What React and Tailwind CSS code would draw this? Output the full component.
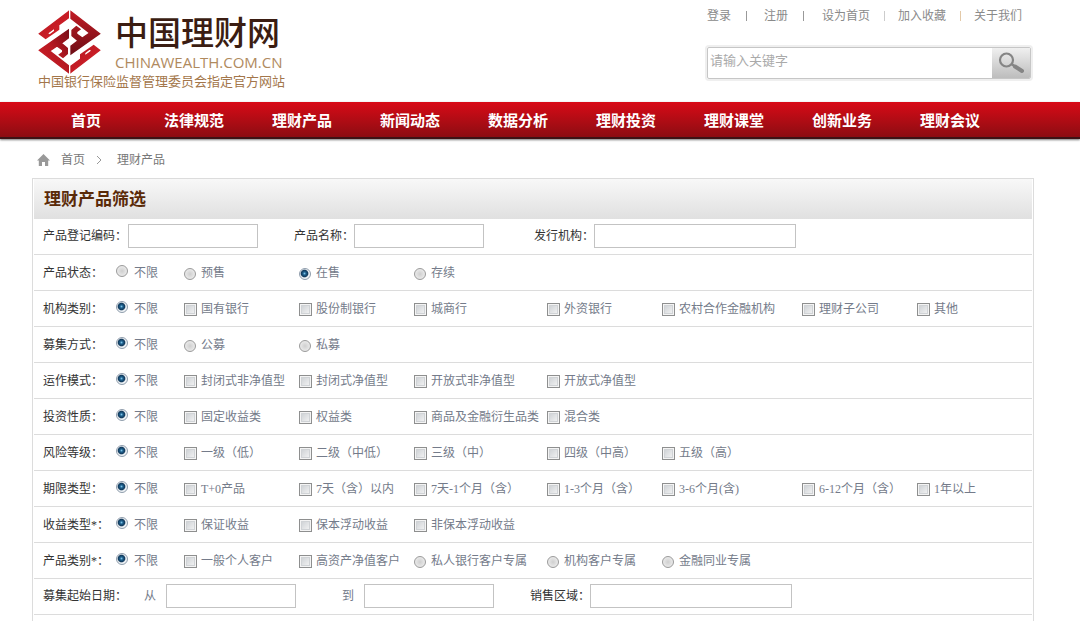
import React from "react";

const topLinks = [
  { text: "登录", cell: "w-[57px]", bar: "ml-[15px] bg-[#999]" },
  { text: "注册", cell: "w-[58px]", bar: "ml-[15px] bg-[#999]" },
  { text: "设为首页", cell: "w-[76px]", bar: "ml-[14px] bg-[#ccc]" },
  { text: "加入收藏", cell: "w-[76px]", bar: "ml-[14px] bg-[#e3c9a8]" },
  { text: "关于我们", cell: "w-[49px]", bar: "" },
];

const navItems = ["首页", "法律规范", "理财产品", "新闻动态", "数据分析", "理财投资", "理财课堂", "创新业务", "理财会议"];

const columnWidths = ["w-[115px]", "w-[115px]", "w-[133px]", "w-[115px]", "w-[140px]", "w-[115px]", "w-[115px]"];

const filters = [
  { name: "status", label: "产品状态：", anyChecked: false, options: ["预售", "在售", "存续"], radios: [0, 1, 2], selected: 1 },
  { name: "orgType", label: "机构类别：", options: ["国有银行", "股份制银行", "城商行", "外资银行", "农村合作金融机构", "理财子公司", "其他"] },
  { name: "raise", label: "募集方式：", options: ["公募", "私募"], radios: [0, 1] },
  { name: "mode", label: "运作模式：", options: ["封闭式非净值型", "封闭式净值型", "开放式非净值型", "开放式净值型"] },
  { name: "nature", label: "投资性质：", options: ["固定收益类", "权益类", "商品及金融衍生品类", "混合类"] },
  { name: "risk", label: "风险等级：", options: ["一级（低）", "二级（中低）", "三级（中）", "四级（中高）", "五级（高）"] },
  { name: "term", label: "期限类型：", options: ["T+0产品", "7天（含）以内", "7天-1个月（含）", "1-3个月（含）", "3-6个月(含)", "6-12个月（含）", "1年以上"] },
  { name: "income", label: "收益类型*：", options: ["保证收益", "保本浮动收益", "非保本浮动收益"] },
  { name: "client", label: "产品类别*：", options: ["一般个人客户", "高资产净值客户", "私人银行客户专属", "机构客户专属", "金融同业专属"], radios: [2, 3, 4] },
];

const radioStyle =
  "size-3 shrink-0 appearance-none rounded-full border border-[#9a9a9a] bg-[radial-gradient(circle,#cfcfcf_0%,#e0e0e0_45%,#f4f4f4_100%)] checked:border-[#8f9dac] checked:bg-[radial-gradient(circle_at_45%_45%,#7fc4e8_0%,#1d5f8c_20%,#123a5c_42%,#eef2f5_56%)]";
const checkStyle =
  "size-[13px] shrink-0 appearance-none border border-[#8e8f8f] bg-[linear-gradient(135deg,#c8ccd0,#f8f8f8)] shadow-[inset_0_0_0_1px_#f4f4f4,inset_0_0_0_2px_#d0d3d6]";
const fieldStyle = "h-6 border border-[#c3c3c3] bg-white px-1 outline-none";

function LogoMark() {
  return (
    <svg viewBox="9 4 189 192" className="h-16 w-[63px]" strokeWidth="4" aria-hidden="true">
      <defs>
        <linearGradient id="bright" x1="0" y1="0" x2="1" y2="1">
          <stop offset="0" stopColor="#b3161f" />
          <stop offset="1" stopColor="#d8222b" />
        </linearGradient>
        <linearGradient id="dark" x1="0" y1="0" x2="0" y2="1">
          <stop offset="0" stopColor="#c01a23" />
          <stop offset="1" stopColor="#6e0d15" />
        </linearGradient>
        <linearGradient id="lower" x1="1" y1="0" x2="0" y2="1">
          <stop offset="0" stopColor="#7a0d16" />
          <stop offset="0.500" stopColor="#b91922" />
          <stop offset="1" stopColor="#cf1f28" />
        </linearGradient>
      </defs>
      <path fill="url(#bright)" stroke="url(#bright)" d="M100 9L13 75L32 89L71 62V50L59 59V68L44 79L37 74L100 28Z" />
      <path fill="url(#lower)" stroke="url(#lower)" d="M100 64L13 125L100 191V171L44 127L66 112L83 124V131L73 138L84 146L97 135V119L79 104L100 88Z" />
      <path fill="url(#dark)" stroke="url(#dark)" d="M108 136L194 75L108 9V29L164 73L142 88L125 76V69L135 62L124 54L111 65V81L129 96L108 112Z" />
      <path fill="url(#bright)" stroke="url(#bright)" d="M108 191L194 125L176 111L137 138V150L149 141V132L164 121L171 126L108 172Z" />
    </svg>
  );
}

function Header() {
  return (
    <header className="mr-[49px] ml-8 flex h-[102px] max-w-[999px] justify-between">
      <a href="#" className="ml-1.5 block pt-2.5">
        <span className="flex h-[62px]">
          <LogoMark />
          <span className="ml-3.5 block">
            <span className="block h-[42px] text-[33px] leading-[48px] font-medium text-[#3b1d12]">中国理财网</span>
            <span className="block font-['Open_Sans'] text-[15px] leading-5 text-[#b08a5e]">CHINAWEALTH.COM.CN</span>
          </span>
        </span>
        <span className="block text-[13px] leading-5 text-[#a3764a]">中国银行保险监督管理委员会指定官方网站</span>
      </a>
      <div>
        <nav className="flex h-8 items-center text-[#8a8a8a]" aria-label="用户">
          {topLinks.map((l) => (
            <span key={l.text} className={`flex items-center ${l.cell}`}>
              <a href="#" className="whitespace-nowrap">{l.text}</a>
              {l.bar && <i className={`h-2.5 w-px ${l.bar}`} />}
            </span>
          ))}
        </nav>
        <form className="mt-[15px] flex h-8 w-[324px] overflow-hidden rounded-xs border border-[#c6c6c6] shadow-[0_0_0_2px_#efefef]">
          <input aria-label="关键字" placeholder="请输入关键字" className="min-w-0 flex-1 px-0.5 pb-1 text-[13px] outline-none placeholder:text-[#aaa]" />
          <button type="button" aria-label="搜索" className="flex w-[38px] items-center justify-center bg-linear-to-b from-[#f0f0f0] to-[#bdbdbd]">
            <svg viewBox="0 0 26 22" className="h-[22px] w-[26px]" fill="none" stroke="#858585" aria-hidden="true">
              <circle cx="8.500" cy="8" r="6.500" strokeWidth="2.200" />
              <path d="M13.500 12L17 14.500" strokeWidth="2.500" />
              <path d="M17 14.500L24 19" strokeWidth="4" strokeLinecap="round" />
            </svg>
          </button>
        </form>
      </div>
    </header>
  );
}

function Option({ type, name, text, checked, width }) {
  return (
    <label className={`flex shrink-0 items-center whitespace-nowrap ${width}`}>
      <input type={type} name={name} defaultChecked={checked} className={type === "radio" ? `${radioStyle} mt-0.5 mr-[5px]` : `${checkStyle} mt-0.5 mr-1`} />
      {text}
    </label>
  );
}

function Field({ id, label, labelStyle, width }) {
  return (
    <>
      <label htmlFor={id} className={`shrink-0 whitespace-nowrap ${labelStyle}`}>{label}</label>
      <input id={id} className={`${fieldStyle} ${width}`} />
    </>
  );
}

export default function App() {
  return (
    <div lang="zh-CN" className="min-h-screen bg-white font-['Liberation_Serif','Noto_Sans_CJK_SC',sans-serif] text-xs text-[#747b8a]">
      <Header />
      <nav className="h-[37px] border-b-2 border-[#3d1215] bg-linear-to-b from-[#d90916] to-[#8c0c12] pt-px pl-8 shadow-[0_1px_2px_#777]" aria-label="主导航">
        <ul className="flex">
          {navItems.map((t) => (
            <li key={t} className="w-[108px] text-center text-[15px] leading-[37px] font-bold text-white">
              <a href="#">{t}</a>
            </li>
          ))}
        </ul>
      </nav>
      <nav className="ml-[37px] flex h-[39px] items-center pt-0.5 text-[#777]" aria-label="位置">
        <svg viewBox="0 0 13 12" className="mr-[11px] h-3 w-[13px]" fill="#999" aria-hidden="true">
          <path d="M6.500 0L13 6.500H11.200V12H8V8H5V12H1.800V6.500H0Z" />
        </svg>
        <a href="#">首页</a>
        <svg viewBox="0 0 6 10" className="mr-[15px] ml-[11px] h-2.5 w-1.5" fill="none" stroke="#999" aria-hidden="true">
          <path d="M1 1L5 5L1 9" />
        </svg>
        <span>理财产品</span>
      </nav>
      <main className="mr-[46px] ml-8 max-w-[1002px] border border-b-0 border-[#dcdcdc] px-px pb-2">
        <h1 className="h-10 bg-linear-to-b from-[#f8f8f8] to-[#e0e0e0] pt-px pl-2.5 text-[17px] leading-10 font-bold text-[#5a2a08]">理财产品筛选</h1>
        <form>
          <div className="flex h-9 items-center border-b border-[#dcdcdc] pb-px pl-[9px] text-[#333]">
            <Field id="code" label="产品登记编码：" labelStyle="w-[85px]" width="w-[130px]" />
            <Field id="pname" label="产品名称：" labelStyle="ml-9 w-[60px]" width="w-[130px]" />
            <Field id="issuer" label="发行机构：" labelStyle="ml-[50px] w-[60px]" width="w-[202px]" />
          </div>
          {filters.map((f) => (
            <fieldset key={f.name} className="flex h-9 items-center border-b border-[#dcdcdc] pl-[9px]" aria-label={f.label}>
              <span className="w-[73px] shrink-0 whitespace-nowrap text-[#333]">{f.label}</span>
              <label className="flex w-[68px] shrink-0 items-center whitespace-nowrap">
                <input type="radio" name={f.name} defaultChecked={f.anyChecked !== false} className={`${radioStyle} mr-1.5 mb-1`} />
                不限
              </label>
              {f.options.map((o, i) => (
                <Option
                  key={o}
                  type={f.radios?.includes(i) ? "radio" : "checkbox"}
                  name={f.name}
                  text={o}
                  checked={f.selected === i}
                  width={columnWidths[i]}
                />
              ))}
            </fieldset>
          ))}
          <div className="flex h-9 items-center border-b border-[#dcdcdc] pb-px pl-[9px]">
            <span className="w-[101px] shrink-0 text-[#333]">募集起始日期：</span>
            <Field id="from" label="从" labelStyle="w-[22px]" width="w-[130px]" />
            <Field id="to" label="到" labelStyle="ml-[46px] w-[22px]" width="w-[130px]" />
            <Field id="area" label="销售区域：" labelStyle="ml-9 w-[60px] text-[#333]" width="w-[202px]" />
          </div>
        </form>
      </main>
    </div>
  );
}
